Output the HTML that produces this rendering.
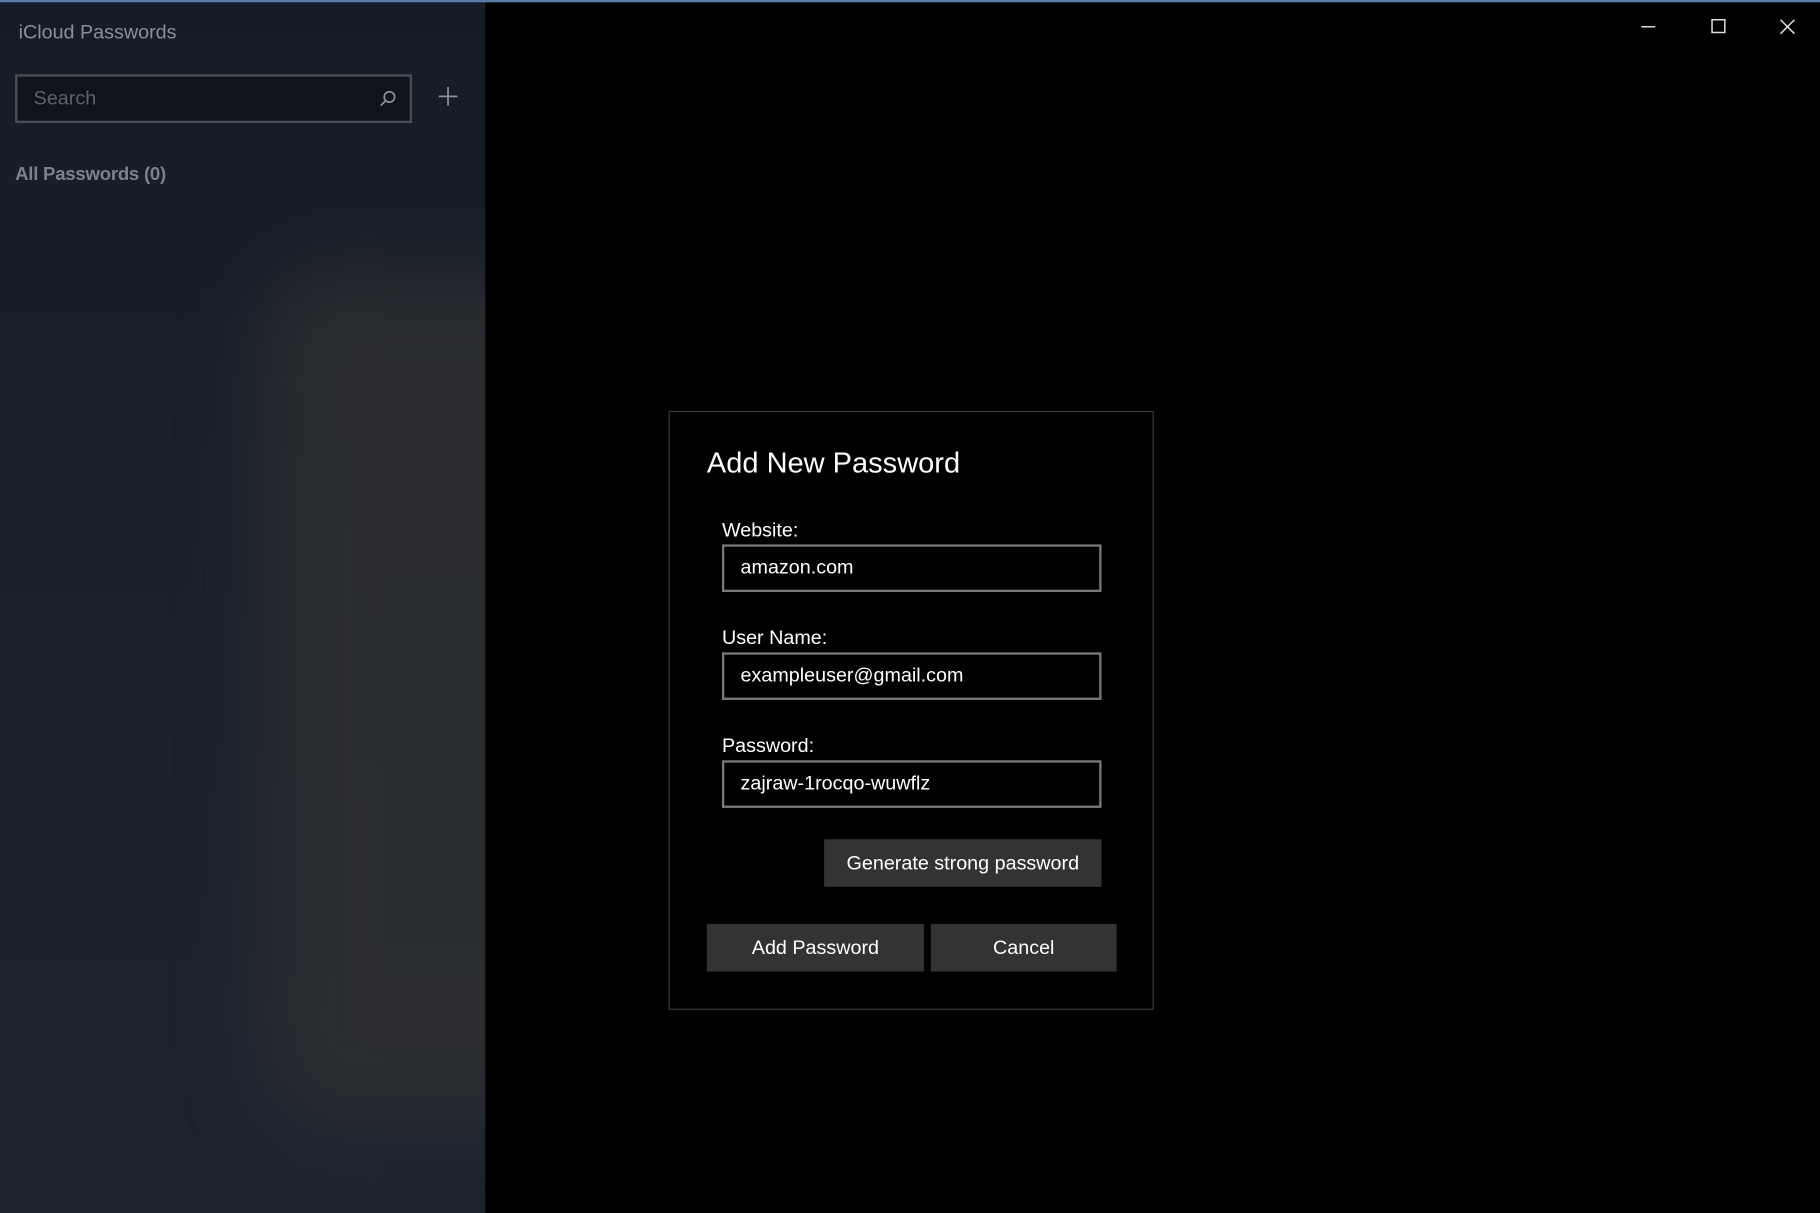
<!DOCTYPE html>
<html><head><meta charset="utf-8"><style>
html,body{margin:0;padding:0;background:#000;overflow:hidden;width:1820px;height:1213px}
#w{position:absolute;left:0;top:0;width:1568px;height:1045px;transform:scale(1.16071,1.16077);transform-origin:0 0;background:#000;font-family:"Liberation Sans",sans-serif;color:#fff}
.top{position:absolute;left:0;top:0;width:1568px;height:2px;background:#5a7aa8}
.side{position:absolute;left:0;top:2px;width:418px;height:1043px;background:linear-gradient(180deg,#161c27 0%,#18202b 40%,#1c2430 100%);overflow:hidden}
.blob{position:absolute;left:225px;top:230px;width:300px;height:740px;border-radius:60px;background:#2e2f31;filter:blur(35px);opacity:.85}
.t{position:absolute;left:16px;top:16px;font-size:17px;color:#8a8f98}
.s{position:absolute;left:13px;top:62px;width:338px;height:38px;border:2px solid #4a4f57;background:#0f131a}
.s span{position:absolute;left:14px;top:9px;font-size:17px;color:#5d636b}
.ap{position:absolute;left:13px;top:140px;font-size:16px;font-weight:bold;color:#7d828a;letter-spacing:-.2px}
.dlg{position:absolute;left:576px;top:354px;width:416px;height:514px;border:1.5px solid #3a3a3a;background:#000}
.h{position:absolute;left:32px;top:30px;font-size:25px}
.l{position:absolute;left:45px;font-size:17px}
.in{position:absolute;left:45px;width:323px;height:37px;border:2px solid #7a7a7a}
.in span{position:absolute;left:14px;top:8px;font-size:17px}
.b{position:absolute;height:41px;background:#333;font-size:17px;text-align:center;line-height:41px}
</style></head><body><div id="w">
<div class="side"><div class="blob"></div>
<div class="t">iCloud Passwords</div>
<div class="s"><span>Search</span>
<svg style="position:absolute;left:311px;top:11px" width="16" height="16" viewBox="0 0 16 16" fill="none" stroke="#8a8f98" stroke-width="1.5"><circle cx="9.5" cy="6.5" r="4.5"/><path d="M6.3 9.7 2 14"/></svg></div>
<svg style="position:absolute;left:377px;top:72px" width="18" height="18" viewBox="0 0 18 18" stroke="#8a8f98" stroke-width="1.5"><path d="M9 1v16M1 9h16"/></svg>
<div class="ap">All Passwords (0)</div>
</div>
<div class="top"></div>
<svg style="position:absolute;left:1412px;top:15px" width="140" height="18" viewBox="0 0 140 18" fill="none" stroke="#ddd" stroke-width="1.3"><path d="M2 8h12"/><rect x="63" y="2" width="11" height="11"/><path d="M122 2l12 12M134 2l-12 12"/></svg>
<div class="dlg">
<div class="h">Add New Password</div>
<div class="l" style="top:92px">Website:</div>
<div class="in" style="top:114px"><span>amazon.com</span></div>
<div class="l" style="top:185px">User Name:</div>
<div class="in" style="top:207px"><span>exampleuser@gmail.com</span></div>
<div class="l" style="top:278px">Password:</div>
<div class="in" style="top:300px"><span>zajraw-1rocqo-wuwflz</span></div>
<div class="b" style="left:133px;top:368px;width:239px">Generate strong password</div>
<div class="b" style="left:32px;top:441px;width:187px">Add Password</div>
<div class="b" style="left:225px;top:441px;width:160px">Cancel</div>
</div>
</div></body></html>
